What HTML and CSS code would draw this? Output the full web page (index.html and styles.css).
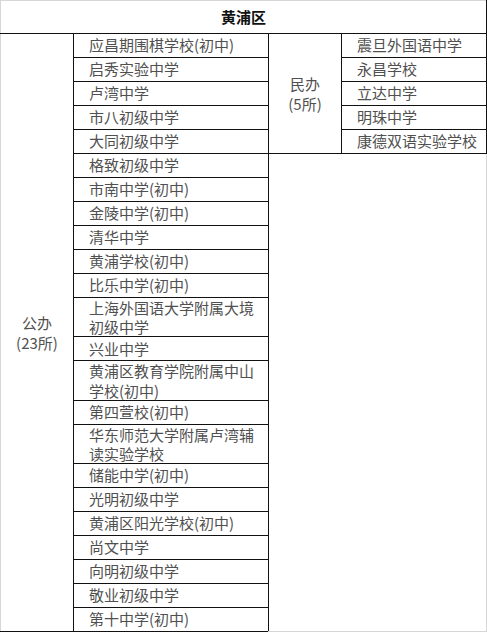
FILE: index.html
```html
<!DOCTYPE html>
<html lang="zh-CN">
<head>
<meta charset="utf-8">
<title>黄浦区</title>
<link rel="stylesheet" href="styles.css">
</head>
<body>
<table class="sheet">
  <colgroup>
    <col class="c-type">
    <col class="c-school">
    <col class="c-type">
    <col class="c-private">
  </colgroup>
  <tr class="head"><th colspan="4">黄浦区</th></tr>
  <tr><td class="type pub" rowspan="23">公办<br>(23所)</td><td>应昌期围棋学校(初中)</td><td class="type" rowspan="5">民办<br>(5所)</td><td>震旦外国语中学</td></tr>
  <tr><td>启秀实验中学</td><td>永昌学校</td></tr>
  <tr><td>卢湾中学</td><td>立达中学</td></tr>
  <tr><td>市八初级中学</td><td>明珠中学</td></tr>
  <tr><td>大同初级中学</td><td>康德双语实验学校</td></tr>
  <tr><td>格致初级中学</td><td class="blank" colspan="2" rowspan="18"></td></tr>
  <tr><td>市南中学(初中)</td></tr>
  <tr><td>金陵中学(初中)</td></tr>
  <tr><td>清华中学</td></tr>
  <tr><td>黄浦学校(初中)</td></tr>
  <tr><td>比乐中学(初中)</td></tr>
  <tr class="two"><td>上海外国语大学附属大境<br>初级中学</td></tr>
  <tr><td>兴业中学</td></tr>
  <tr class="two"><td>黄浦区教育学院附属中山<br>学校(初中)</td></tr>
  <tr><td>第四萱校(初中)</td></tr>
  <tr class="two"><td>华东师范大学附属卢湾辅<br>读实验学校</td></tr>
  <tr><td>储能中学(初中)</td></tr>
  <tr><td>光明初级中学</td></tr>
  <tr><td>黄浦区阳光学校(初中)</td></tr>
  <tr><td>尚文中学</td></tr>
  <tr><td>向明初级中学</td></tr>
  <tr><td>敬业初级中学</td></tr>
  <tr><td>第十中学(初中)</td></tr>
</table>
</body>
</html>
```

FILE: styles.css
```css
html, body {
  margin: 0;
  padding: 0;
  background: #ffffff;
}

.sheet {
  border-collapse: collapse;
  table-layout: fixed;
  width: 486px;
  font-family: "Noto Sans CJK SC", "Noto Sans", sans-serif;
  font-size: 15px;
  color: #505050;
}

.c-type { width: 73px; }
.c-school { width: 195px; }
.c-private { width: 145px; }

.sheet th,
.sheet td {
  border: 1px solid #111111;
  padding: 0 0 0 15px;
  line-height: 18.5px;
  text-align: left;
  vertical-align: middle;
  white-space: nowrap;
}

.sheet tr { height: 24px; }
.sheet tr.head { height: 33px; }

.sheet tr.two td {
  line-height: 19.2px;
}

.sheet th {
  border-top-color: #d6d6d6;
  border-left-color: #d6d6d6;
  text-align: center;
  padding: 0;
  font-weight: 700;
  color: #111111;
}

.sheet td.type {
  text-align: center;
  padding: 0;
  line-height: 19.5px;
}

.sheet td.pub {
  border-left-color: #d6d6d6;
}

.sheet td.blank {
  border-right-color: #d6d6d6;
  border-bottom-color: #d6d6d6;
  padding: 0;
}
```
